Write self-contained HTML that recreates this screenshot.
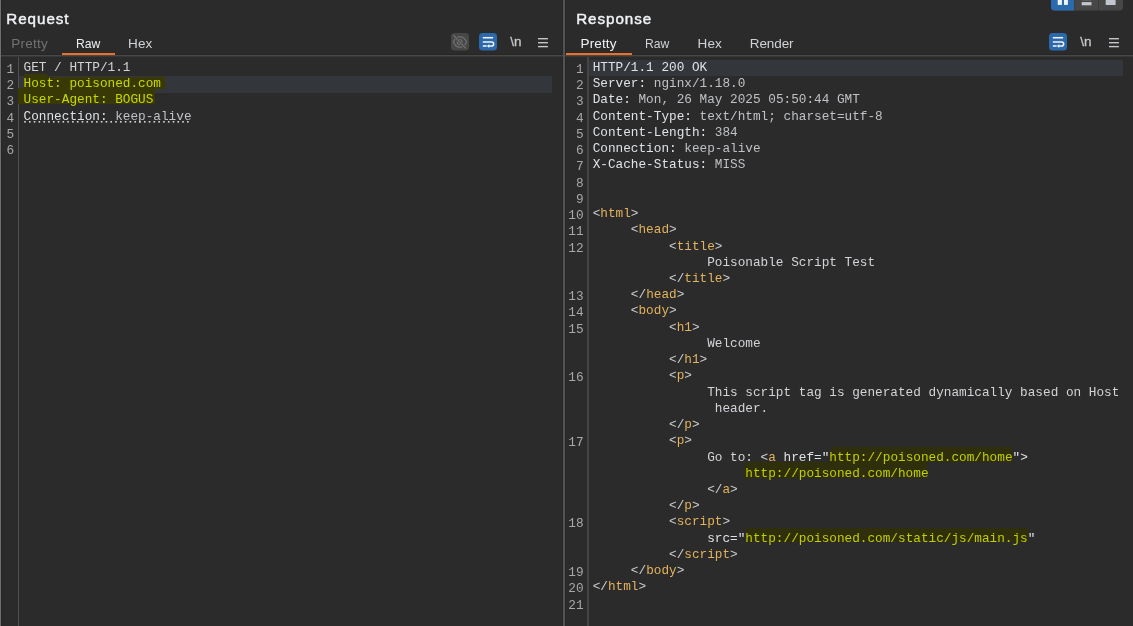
<!DOCTYPE html>
<html><head><meta charset="utf-8"><style>
html,body{margin:0;padding:0;-webkit-font-smoothing:antialiased;background:#2b2b2b;width:1133px;height:626px;overflow:hidden;position:relative}
*{box-sizing:border-box}
.abs{position:absolute}
.row{position:absolute;font-family:"Liberation Mono",monospace;font-size:12.72px;line-height:16.23px;height:16.23px;white-space:pre;color:#d2d4d8;margin-top:0px}
.ln{position:absolute;font-family:"Liberation Mono",monospace;font-size:12.72px;line-height:16.23px;height:16.23px;white-space:pre;color:#a8a8a8;text-align:right;margin-top:2px}
.title{position:absolute;font-family:"Liberation Sans",sans-serif;font-size:15.2px;letter-spacing:0.95px;-webkit-text-stroke:0.45px #f0f2f6;color:#f0f2f6;line-height:20px}
.tab{position:absolute;font-family:"Liberation Sans",sans-serif;font-size:13.5px;letter-spacing:0.15px;color:#d0d2d6;line-height:18px}
#wrap{position:absolute;left:0;top:0;width:1133px;height:626px;will-change:transform}
</style></head><body><div id="wrap">

<div class="abs" style="left:0;top:0;width:1px;height:626px;background:#707070"></div>
<div class="abs" style="left:1px;top:0;width:1px;height:626px;background:#262626"></div>
<div class="abs" style="left:562px;top:0;width:1px;height:626px;background:#272727"></div>
<div class="abs" style="left:563px;top:0;width:2px;height:626px;background:#535353"></div>
<div class="abs" style="left:565px;top:0;width:1px;height:626px;background:#272727"></div>
<div class="abs" style="left:18px;top:56px;width:1px;height:570px;background:#505050"></div>
<div class="abs" style="left:587px;top:56px;width:2px;height:570px;background:#454545"></div>
<div class="abs" style="left:1px;top:54px;width:562px;height:1px;background:#262626"></div>
<div class="abs" style="left:1px;top:55px;width:562px;height:1px;background:#484848"></div>
<div class="abs" style="left:1px;top:56px;width:562px;height:1px;background:#373737"></div>
<div class="abs" style="left:565px;top:54px;width:568px;height:1px;background:#262626"></div>
<div class="abs" style="left:565px;top:55px;width:568px;height:1px;background:#484848"></div>
<div class="abs" style="left:565px;top:56px;width:568px;height:1px;background:#373737"></div>
<div class="abs" style="left:62px;top:53.3px;width:53px;height:2.2px;background:#ec6f2c"></div>
<div class="abs" style="left:566px;top:53.3px;width:65.5px;height:2.2px;background:#ec6f2c"></div>
<div class="title" style="left:6.3px;top:8.8px">Request</div>
<div class="title" style="left:576.2px;top:8.8px">Response</div>
<div class="tab" style="left:11.2px;top:35px;color:#727272;letter-spacing:0.25px">Pretty</div>
<div class="tab" style="left:75.8px;top:35px;color:#eef0f4;letter-spacing:0px;transform:scaleX(0.9);transform-origin:0 0">Raw</div>
<div class="tab" style="left:128px;top:35px">Hex</div>
<div class="tab" style="left:580.5px;top:35px;color:#eef0f4">Pretty</div>
<div class="tab" style="left:644.8px;top:35px;letter-spacing:0px;transform:scaleX(0.9);transform-origin:0 0">Raw</div>
<div class="tab" style="left:697.5px;top:35px">Hex</div>
<div class="tab" style="left:749.8px;top:35px;letter-spacing:-0.1px">Render</div>
<div class="abs" style="left:19px;top:76px;width:533px;height:16.7px;background:#33373b"></div>
<div class="abs" style="left:589px;top:59.8px;width:534px;height:16.5px;background:#33373b"></div>
<div class="abs" style="left:24px;top:77px;width:141px;height:12px;background:#393905"></div>
<div class="abs" style="left:24px;top:73.5px;width:23px;height:4px;background:#393905"></div>
<div class="abs" style="left:18px;top:88px;width:136.5px;height:16.4px;background:#393905"></div>
<div class="abs" style="left:830.7px;top:447px;width:181.3px;height:15px;background:#2f2f0c"></div>
<div class="abs" style="left:744px;top:462px;width:183.3px;height:15.5px;background:#2f2f0c"></div>
<div class="abs" style="left:745.9px;top:528px;width:282px;height:13.5px;background:#2f2f0c"></div>
<svg class="abs" style="left:24px;top:121.4px" width="170" height="2" viewBox="0 0 170 2"><rect x="0.20" y="0" width="1.6" height="1.6" fill="#d4d8de"/><rect x="4.99" y="0" width="1.6" height="1.6" fill="#d4d8de"/><rect x="9.78" y="0" width="1.6" height="1.6" fill="#d4d8de"/><rect x="14.57" y="0" width="1.6" height="1.6" fill="#d4d8de"/><rect x="19.36" y="0" width="1.6" height="1.6" fill="#d4d8de"/><rect x="24.15" y="0" width="1.6" height="1.6" fill="#d4d8de"/><rect x="28.94" y="0" width="1.6" height="1.6" fill="#d4d8de"/><rect x="33.73" y="0" width="1.6" height="1.6" fill="#d4d8de"/><rect x="38.52" y="0" width="1.6" height="1.6" fill="#d4d8de"/><rect x="43.31" y="0" width="1.6" height="1.6" fill="#d4d8de"/><rect x="48.10" y="0" width="1.6" height="1.6" fill="#d4d8de"/><rect x="52.89" y="0" width="1.6" height="1.6" fill="#d4d8de"/><rect x="57.68" y="0" width="1.6" height="1.6" fill="#d4d8de"/><rect x="62.47" y="0" width="1.6" height="1.6" fill="#d4d8de"/><rect x="67.26" y="0" width="1.6" height="1.6" fill="#d4d8de"/><rect x="72.05" y="0" width="1.6" height="1.6" fill="#d4d8de"/><rect x="76.84" y="0" width="1.6" height="1.6" fill="#d4d8de"/><rect x="81.63" y="0" width="1.6" height="1.6" fill="#d4d8de"/><rect x="86.42" y="0" width="1.6" height="1.6" fill="#d4d8de"/><rect x="91.21" y="0" width="1.6" height="1.6" fill="#d4d8de"/><rect x="96.00" y="0" width="1.6" height="1.6" fill="#d4d8de"/><rect x="100.79" y="0" width="1.6" height="1.6" fill="#d4d8de"/><rect x="105.58" y="0" width="1.6" height="1.6" fill="#d4d8de"/><rect x="110.37" y="0" width="1.6" height="1.6" fill="#d4d8de"/><rect x="115.16" y="0" width="1.6" height="1.6" fill="#d4d8de"/><rect x="119.95" y="0" width="1.6" height="1.6" fill="#d4d8de"/><rect x="124.74" y="0" width="1.6" height="1.6" fill="#d4d8de"/><rect x="129.53" y="0" width="1.6" height="1.6" fill="#d4d8de"/><rect x="134.32" y="0" width="1.6" height="1.6" fill="#d4d8de"/><rect x="139.11" y="0" width="1.6" height="1.6" fill="#d4d8de"/><rect x="143.90" y="0" width="1.6" height="1.6" fill="#d4d8de"/><rect x="148.69" y="0" width="1.6" height="1.6" fill="#d4d8de"/><rect x="153.48" y="0" width="1.6" height="1.6" fill="#d4d8de"/><rect x="158.27" y="0" width="1.6" height="1.6" fill="#d4d8de"/><rect x="163.06" y="0" width="1.6" height="1.6" fill="#d4d8de"/></svg>
<div class="ln" style="top:60.00px;left:-25.8px;width:40px">1</div>
<div class="row" style="top:60.00px;left:23.6px"><span style="color:#d2d4d8;">GET / HTTP/1.1</span></div>
<div class="ln" style="top:76.23px;left:-25.8px;width:40px">2</div>
<div class="row" style="top:76.23px;left:23.6px"><span style="color:#c9d900;">Host: poisoned.com</span></div>
<div class="ln" style="top:92.46px;left:-25.8px;width:40px">3</div>
<div class="row" style="top:92.46px;left:23.6px"><span style="color:#c9d900;">User-Agent: BOGUS</span></div>
<div class="ln" style="top:108.69px;left:-25.8px;width:40px">4</div>
<div class="row" style="top:108.69px;left:23.6px"><span style="color:#dfe2e6;">Connection:</span><span style="color:#bfc1c5;"> keep-alive</span></div>
<div class="ln" style="top:124.92px;left:-25.8px;width:40px">5</div>
<div class="ln" style="top:141.15px;left:-25.8px;width:40px">6</div>
<div class="ln" style="top:60.00px;left:543.6px;width:40px">1</div>
<div class="row" style="top:60.00px;left:592.7px"><span style="color:#dfe2e6;">HTTP/1.1 200 OK</span></div>
<div class="ln" style="top:76.23px;left:543.6px;width:40px">2</div>
<div class="row" style="top:76.23px;left:592.7px"><span style="color:#dfe2e6;">Server:</span><span style="color:#bfc1c5;"> nginx/1.18.0</span></div>
<div class="ln" style="top:92.46px;left:543.6px;width:40px">3</div>
<div class="row" style="top:92.46px;left:592.7px"><span style="color:#dfe2e6;">Date:</span><span style="color:#bfc1c5;"> Mon, 26 May 2025 05:50:44 GMT</span></div>
<div class="ln" style="top:108.69px;left:543.6px;width:40px">4</div>
<div class="row" style="top:108.69px;left:592.7px"><span style="color:#dfe2e6;">Content-Type:</span><span style="color:#bfc1c5;"> text/html; charset=utf-8</span></div>
<div class="ln" style="top:124.92px;left:543.6px;width:40px">5</div>
<div class="row" style="top:124.92px;left:592.7px"><span style="color:#dfe2e6;">Content-Length:</span><span style="color:#bfc1c5;"> 384</span></div>
<div class="ln" style="top:141.15px;left:543.6px;width:40px">6</div>
<div class="row" style="top:141.15px;left:592.7px"><span style="color:#dfe2e6;">Connection:</span><span style="color:#bfc1c5;"> keep-alive</span></div>
<div class="ln" style="top:157.38px;left:543.6px;width:40px">7</div>
<div class="row" style="top:157.38px;left:592.7px"><span style="color:#dfe2e6;">X-Cache-Status:</span><span style="color:#bfc1c5;"> MISS</span></div>
<div class="ln" style="top:173.61px;left:543.6px;width:40px">8</div>
<div class="ln" style="top:189.84px;left:543.6px;width:40px">9</div>
<div class="ln" style="top:206.07px;left:543.6px;width:40px">10</div>
<div class="row" style="top:206.07px;left:592.7px"><span style="color:#c9cbcf;">&lt;</span><span style="color:#e3b35c;">html</span><span style="color:#c9cbcf;">&gt;</span></div>
<div class="ln" style="top:222.30px;left:543.6px;width:40px">11</div>
<div class="row" style="top:222.30px;left:592.7px"><span style="color:#c9cbcf;">     &lt;</span><span style="color:#e3b35c;">head</span><span style="color:#c9cbcf;">&gt;</span></div>
<div class="ln" style="top:238.53px;left:543.6px;width:40px">12</div>
<div class="row" style="top:238.53px;left:592.7px"><span style="color:#c9cbcf;">          &lt;</span><span style="color:#e3b35c;">title</span><span style="color:#c9cbcf;">&gt;</span></div>
<div class="row" style="top:254.76px;left:592.7px"><span style="color:#d2d4d8;">               Poisonable Script Test</span></div>
<div class="row" style="top:270.99px;left:592.7px"><span style="color:#c9cbcf;">          &lt;/</span><span style="color:#e3b35c;">title</span><span style="color:#c9cbcf;">&gt;</span></div>
<div class="ln" style="top:287.22px;left:543.6px;width:40px">13</div>
<div class="row" style="top:287.22px;left:592.7px"><span style="color:#c9cbcf;">     &lt;/</span><span style="color:#e3b35c;">head</span><span style="color:#c9cbcf;">&gt;</span></div>
<div class="ln" style="top:303.45px;left:543.6px;width:40px">14</div>
<div class="row" style="top:303.45px;left:592.7px"><span style="color:#c9cbcf;">     &lt;</span><span style="color:#e3b35c;">body</span><span style="color:#c9cbcf;">&gt;</span></div>
<div class="ln" style="top:319.68px;left:543.6px;width:40px">15</div>
<div class="row" style="top:319.68px;left:592.7px"><span style="color:#c9cbcf;">          &lt;</span><span style="color:#e3b35c;">h1</span><span style="color:#c9cbcf;">&gt;</span></div>
<div class="row" style="top:335.91px;left:592.7px"><span style="color:#d2d4d8;">               Welcome</span></div>
<div class="row" style="top:352.14px;left:592.7px"><span style="color:#c9cbcf;">          &lt;/</span><span style="color:#e3b35c;">h1</span><span style="color:#c9cbcf;">&gt;</span></div>
<div class="ln" style="top:368.37px;left:543.6px;width:40px">16</div>
<div class="row" style="top:368.37px;left:592.7px"><span style="color:#c9cbcf;">          &lt;</span><span style="color:#e3b35c;">p</span><span style="color:#c9cbcf;">&gt;</span></div>
<div class="row" style="top:384.60px;left:592.7px"><span style="color:#d2d4d8;">               This script tag is generated dynamically based on Host</span></div>
<div class="row" style="top:400.83px;left:592.7px"><span style="color:#d2d4d8;">                header.</span></div>
<div class="row" style="top:417.06px;left:592.7px"><span style="color:#c9cbcf;">          &lt;/</span><span style="color:#e3b35c;">p</span><span style="color:#c9cbcf;">&gt;</span></div>
<div class="ln" style="top:433.29px;left:543.6px;width:40px">17</div>
<div class="row" style="top:433.29px;left:592.7px"><span style="color:#c9cbcf;">          &lt;</span><span style="color:#e3b35c;">p</span><span style="color:#c9cbcf;">&gt;</span></div>
<div class="row" style="top:449.52px;left:592.7px"><span style="color:#d2d4d8;">               Go to: &lt;</span><span style="color:#e3b35c;">a</span><span style="color:#dfe2e6;"> href=&quot;</span><span style="color:#c2cf00;">http://poisoned.com/home</span><span style="color:#dfe2e6;">&quot;&gt;</span></div>
<div class="row" style="top:465.75px;left:592.7px"><span style="color:#c2cf00;">                    http://poisoned.com/home</span></div>
<div class="row" style="top:481.98px;left:592.7px"><span style="color:#c9cbcf;">               &lt;/</span><span style="color:#e3b35c;">a</span><span style="color:#c9cbcf;">&gt;</span></div>
<div class="row" style="top:498.21px;left:592.7px"><span style="color:#c9cbcf;">          &lt;/</span><span style="color:#e3b35c;">p</span><span style="color:#c9cbcf;">&gt;</span></div>
<div class="ln" style="top:514.44px;left:543.6px;width:40px">18</div>
<div class="row" style="top:514.44px;left:592.7px"><span style="color:#c9cbcf;">          &lt;</span><span style="color:#e3b35c;">script</span><span style="color:#c9cbcf;">&gt;</span></div>
<div class="row" style="top:530.67px;left:592.7px"><span style="color:#dfe2e6;">               src=&quot;</span><span style="color:#c2cf00;">http://poisoned.com/static/js/main.js</span><span style="color:#dfe2e6;">&quot;</span></div>
<div class="row" style="top:546.90px;left:592.7px"><span style="color:#c9cbcf;">          &lt;/</span><span style="color:#e3b35c;">script</span><span style="color:#c9cbcf;">&gt;</span></div>
<div class="ln" style="top:563.13px;left:543.6px;width:40px">19</div>
<div class="row" style="top:563.13px;left:592.7px"><span style="color:#c9cbcf;">     &lt;/</span><span style="color:#e3b35c;">body</span><span style="color:#c9cbcf;">&gt;</span></div>
<div class="ln" style="top:579.36px;left:543.6px;width:40px">20</div>
<div class="row" style="top:579.36px;left:592.7px"><span style="color:#c9cbcf;">&lt;/</span><span style="color:#e3b35c;">html</span><span style="color:#c9cbcf;">&gt;</span></div>
<div class="ln" style="top:595.59px;left:543.6px;width:40px">21</div>
<svg class="abs" style="left:451.2px;top:33.2px" width="18" height="17.5" viewBox="0 0 18 17.5">
<rect x="0" y="0" width="18" height="17.5" rx="3.5" fill="#474747"/>
<path d="M2.4 9 C5.2 2.1, 12.8 2.1, 15.6 9 C12.8 15.9, 5.2 15.9, 2.4 9 Z" fill="none" stroke="#707070" stroke-width="1.2"/>
<circle cx="8.6" cy="8.9" r="2.4" fill="none" stroke="#707070" stroke-width="1.2"/>
<path d="M2.2 2 L14.8 15.3" stroke="#474747" stroke-width="2.6"/>
<path d="M2.2 2 L14.8 15.3" stroke="#707070" stroke-width="1.2"/>
</svg>
<svg class="abs" style="left:479px;top:33.2px" width="18" height="17.5" viewBox="0 0 18 17.5">
<rect x="0" y="0" width="18" height="17.5" rx="3.5" fill="#2b68ac"/>
<rect x="3.8" y="3.95" width="10.3" height="1.55" fill="#f2f4f8"/>
<path d="M3.8 8.9 H12.6 A2.05 2.05 0 0 1 12.6 13 H9.6" fill="none" stroke="#f2f4f8" stroke-width="1.55"/>
<path d="M10.2 10.9 L7.9 13 L10.2 15.1 Z" fill="#f2f4f8"/>
<rect x="3.8" y="12.2" width="3.9" height="1.55" fill="#f2f4f8"/>
</svg>
<div class="abs" style="left:510.2px;top:34.6px;font-family:Liberation Sans,sans-serif;font-size:13.5px;line-height:14px;color:#c4c6ca;-webkit-text-stroke:0.3px #c4c6ca">\n</div>
<svg class="abs" style="left:538.2px;top:38.2px" width="11" height="10" viewBox="0 0 11 10">
<rect x="0" y="0" width="9.9" height="1.4" fill="#c4c6ca"/>
<rect x="0" y="4" width="9.9" height="1.4" fill="#c4c6ca"/>
<rect x="0" y="7.9" width="9.9" height="1.4" fill="#c4c6ca"/>
</svg>
<svg class="abs" style="left:1049px;top:33.2px" width="18" height="17.5" viewBox="0 0 18 17.5">
<rect x="0" y="0" width="18" height="17.5" rx="3.5" fill="#2b68ac"/>
<rect x="3.8" y="3.95" width="10.3" height="1.55" fill="#f2f4f8"/>
<path d="M3.8 8.9 H12.6 A2.05 2.05 0 0 1 12.6 13 H9.6" fill="none" stroke="#f2f4f8" stroke-width="1.55"/>
<path d="M10.2 10.9 L7.9 13 L10.2 15.1 Z" fill="#f2f4f8"/>
<rect x="3.8" y="12.2" width="3.9" height="1.55" fill="#f2f4f8"/>
</svg>
<div class="abs" style="left:1080.2px;top:34.6px;font-family:Liberation Sans,sans-serif;font-size:13.5px;line-height:14px;color:#c4c6ca;-webkit-text-stroke:0.3px #c4c6ca">\n</div>
<svg class="abs" style="left:1108.7px;top:38.2px" width="11" height="10" viewBox="0 0 11 10">
<rect x="0" y="0" width="9.9" height="1.4" fill="#c4c6ca"/>
<rect x="0" y="4" width="9.9" height="1.4" fill="#c4c6ca"/>
<rect x="0" y="7.9" width="9.9" height="1.4" fill="#c4c6ca"/>
</svg>
<svg class="abs" style="left:1051px;top:0px" width="72" height="11" viewBox="0 0 72 11">
<path d="M0 -2 H72 V7 A3.5 3.5 0 0 1 68.5 10.5 H3.5 A3.5 3.5 0 0 1 0 7 Z" fill="#474747"/>
<path d="M0 -2 H23.3 V10.5 H3.5 A3.5 3.5 0 0 1 0 7 Z" fill="#2c6aae"/>
<rect x="23.3" y="0" width="0.8" height="10.5" fill="#3a3a3a"/>
<rect x="47" y="0" width="0.8" height="10.5" fill="#3a3a3a"/>
<rect x="6.7" y="0" width="4.2" height="4.9" fill="#f2f4f8"/>
<rect x="13" y="0" width="3.9" height="4.9" fill="#f2f4f8"/>
<rect x="30.7" y="2.1" width="9.8" height="3.2" fill="#c2c6ce"/>
<rect x="31" y="0" width="9.4" height="1" fill="#5a5a5a"/>
<rect x="54.7" y="0" width="9.9" height="5" fill="#c2c6ce"/>
</svg>
</div></body></html>
